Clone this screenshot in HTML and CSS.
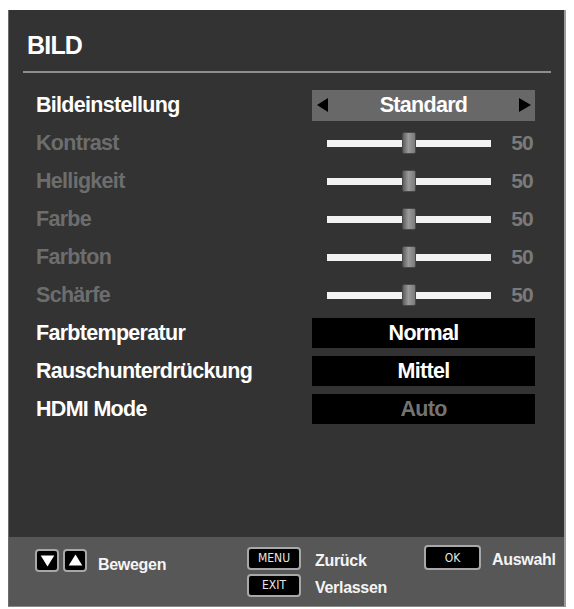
FILE: index.html
```html
<!DOCTYPE html>
<html lang="de">
<head>
<meta charset="utf-8">
<title>BILD</title>
<link rel="stylesheet" href="styles.css">
</head>
<body>
<div class="panel">
  <div class="main">
    <h1 class="title">BILD</h1>
    <div class="rule"></div>
    <ul class="rows">
      <li class="row">
        <span class="label">Bildeinstellung</span>
        <div class="value picker">
          <span class="arrow arrow-left"></span>
          <span class="picker-text">Standard</span>
          <span class="arrow arrow-right"></span>
        </div>
      </li>
      <li class="row is-dim">
        <span class="label">Kontrast</span>
        <div class="value slider">
          <div class="track"><span class="thumb" style="left: 50%"></span></div>
          <span class="num">50</span>
        </div>
      </li>
      <li class="row is-dim">
        <span class="label">Helligkeit</span>
        <div class="value slider">
          <div class="track"><span class="thumb" style="left: 50%"></span></div>
          <span class="num">50</span>
        </div>
      </li>
      <li class="row is-dim">
        <span class="label">Farbe</span>
        <div class="value slider">
          <div class="track"><span class="thumb" style="left: 50%"></span></div>
          <span class="num">50</span>
        </div>
      </li>
      <li class="row is-dim">
        <span class="label">Farbton</span>
        <div class="value slider">
          <div class="track"><span class="thumb" style="left: 50%"></span></div>
          <span class="num">50</span>
        </div>
      </li>
      <li class="row is-dim">
        <span class="label">Schärfe</span>
        <div class="value slider">
          <div class="track"><span class="thumb" style="left: 50%"></span></div>
          <span class="num">50</span>
        </div>
      </li>
      <li class="row">
        <span class="label">Farbtemperatur</span>
        <div class="value choice">Normal</div>
      </li>
      <li class="row">
        <span class="label">Rauschunterdrückung</span>
        <div class="value choice">Mittel</div>
      </li>
      <li class="row">
        <span class="label">HDMI Mode</span>
        <div class="value choice choice-off">Auto</div>
      </li>
    </ul>
  </div>
  <div class="footer">
    <div class="hint hint-nav">
      <span class="key key-arrow">
        <svg viewBox="0 0 20 20" width="17" height="17"><polygon points="2,4 18,4 10,17" fill="#fff"/></svg>
      </span>
      <span class="key key-arrow">
        <svg viewBox="0 0 20 20" width="17" height="17"><polygon points="2,16 18,16 10,3" fill="#fff"/></svg>
      </span>
      <span class="hint-text hint-text-low">Bewegen</span>
    </div>
    <div class="hint-stack">
      <div class="hint">
        <span class="key key-btn">MENU</span>
        <span class="hint-text">Zurück</span>
      </div>
      <div class="hint">
        <span class="key key-btn">EXIT</span>
        <span class="hint-text">Verlassen</span>
      </div>
    </div>
    <div class="hint hint-ok">
      <span class="key key-btn key-ok">OK</span>
      <span class="hint-text">Auswahl</span>
    </div>
  </div>
</div>
</body>
</html>
```

FILE: styles.css
```css
* {
  box-sizing: border-box;
}

html,
body {
  margin: 0;
  padding: 0;
  background: #ffffff;
}

body {
  font-family: "Liberation Sans", Arial, sans-serif;
  font-weight: bold;
  color: #ffffff;
}

/* Outer OSD window */
.panel {
  margin: 10px 0 0 8px;
  width: 558px;
  height: 597px;
  display: flex;
  flex-direction: column;
  background: #333333;
  border-left: 1px solid #6c6c6c;
  border-right: 2px solid #9c9c9c;
  border-bottom: 1px solid #8a8a8a;
}

.main {
  flex: 1;
  padding: 0 13px 0 14px;
}

.title {
  margin: 0;
  padding: 20px 0 0 4px;
  height: 61px;
  font-size: 25px;
  line-height: 30px;
  font-weight: bold;
  letter-spacing: -0.8px;
}

.rule {
  height: 2px;
  background: #8e8e8e;
}

/* Settings list */
.rows {
  list-style: none;
  margin: 13px 0 0;
  padding: 0 16px 0 13px;
}

.row {
  height: 38px;
  display: flex;
  align-items: center;
  justify-content: space-between;
}

.label {
  font-size: 21.5px;
  letter-spacing: -0.7px;
  color: #ffffff;
}

.is-dim .label {
  color: #6d6d6d;
}

.value {
  width: 223px;
  height: 31px;
  display: flex;
  align-items: center;
}

/* Picture mode selector */
.picker {
  background: #686868;
  justify-content: space-between;
  padding: 0 4px 0 5px;
}

.picker-text {
  font-size: 21.5px;
  letter-spacing: -0.7px;
}

.arrow {
  width: 0;
  height: 0;
  border-top: 7px solid transparent;
  border-bottom: 7px solid transparent;
}

.arrow-left {
  border-right: 11px solid #000000;
}

.arrow-right {
  border-left: 12px solid #000000;
}

/* Level sliders */
.slider {
  padding: 0 2px 0 15px;
}

.track {
  position: relative;
  width: 164px;
  height: 7px;
  background: #f2f2f2;
}

.thumb {
  position: absolute;
  top: -8px;
  width: 14px;
  height: 22px;
  margin-left: -7px;
  background: linear-gradient(to right, #5e5e5e, #9a9a9a 45%, #7a7a7a 100%);
  border: 1px solid #4a4a4a;
  border-radius: 2px;
}

.num {
  margin-left: auto;
  font-size: 21px;
  color: #7a7a7a;
  letter-spacing: -0.8px;
}

/* Option boxes */
.choice {
  height: 30px;
  background: #000000;
  justify-content: center;
  font-size: 21.5px;
  letter-spacing: -0.7px;
}

.choice-off {
  color: #737373;
}

/* Key hints */
.footer {
  height: 69px;
  background: #575757;
  display: grid;
  grid-template-columns: 212px 177px auto;
  align-items: start;
  padding: 9px 0 0 26px;
}

.hint {
  display: flex;
  align-items: center;
}

.hint-stack {
  display: flex;
  flex-direction: column;
  gap: 3px;
}

.hint-text {
  font-size: 16px;
  letter-spacing: -0.3px;
  color: #f4f4f4;
  margin-left: 14px;
  padding-top: 6px;
}

.hint-text-low {
  margin-left: 11px;
  padding-top: 10px;
}

.hint-ok .hint-text {
  margin-left: 11px;
  padding-top: 3px;
}

.key {
  display: flex;
  align-items: center;
  justify-content: center;
  background: #000000;
  border: 2px solid #a8a8a8;
  border-radius: 4px;
}

.key-arrow {
  width: 24px;
  height: 23px;
  margin-right: 4px;
}

.key-arrow:nth-child(2) {
  margin-right: 0;
}

.key-btn {
  width: 54px;
  height: 23px;
  font-family: "DejaVu Sans", sans-serif;
  font-stretch: condensed;
  font-weight: normal;
  font-size: 12px;
  color: #e6e6e6;
}

.key-ok {
  width: 57px;
  height: 25px;
  margin-top: -1px;
}
```
